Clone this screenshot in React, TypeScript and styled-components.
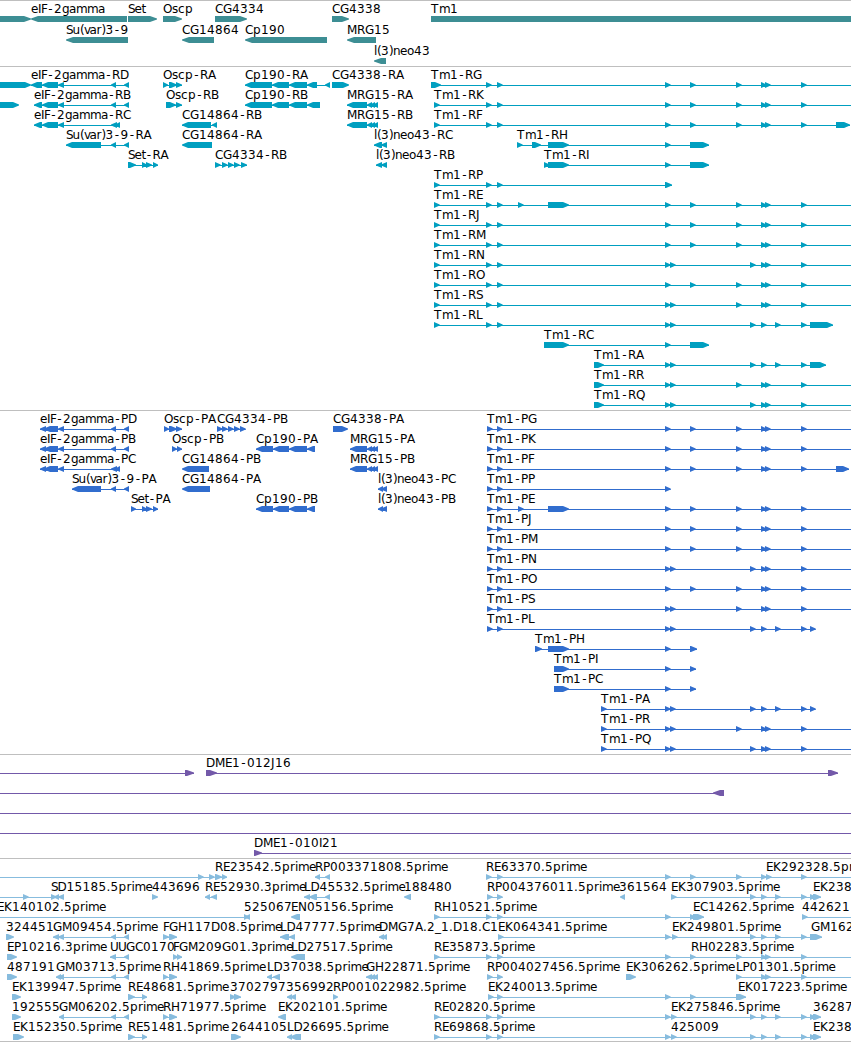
import React from "react";
import styled, { createGlobalStyle } from "styled-components";

const WIDTH = 851;
const EDGE = 860;

type Exon = number | [number, number];
type Dir = 1 | -1;

interface Feature {
  label?: string;
  labelX: number;
  dir: Dir;
  exons: Exon[];
  from?: number;
  to?: number;
}

interface TrackData {
  name: string;
  color: string;
  pitch: number;
  tail: number;
  tip: number;
  rows: Feature[][];
}

/* Forward strand feature; exons given as a start only are short arrows. */
const fwd = (label: string, labelX: number, exons: Exon[], to?: number, from?: number): Feature => ({
  label, labelX, dir: 1, exons, to, from,
});
const rev = (label: string, labelX: number, exons: Exon[], to?: number, from?: number): Feature => ({
  label, labelX, dir: -1, exons, to, from,
});
const text = (label: string, labelX: number): Feature => ({ label, labelX, dir: 1, exons: [] });

const genes: Feature[][] = [
  [
    fwd("", 0, [[-10, 31]]),
    rev("eIF-2gamma", 31, [[31, 127]]),
    fwd("Set", 128, [[128, 157]]),
    fwd("Oscp", 163, [[163, 182]]),
    fwd("CG4334", 215, [[215, 247]]),
    fwd("CG4338", 332, [[332, 349]]),
    fwd("Tm1", 431, [[431, 870]]),
  ],
  [
    rev("Su(var)3-9", 66, [[66, 128]]),
    rev("CG14864", 182, [[182, 214]]),
    rev("Cp190", 245, [[245, 327]]),
    rev("MRG15", 347, [[347, 376]]),
  ],
  [rev("l(3)neo43", 374, [[374, 386]])],
];

const mrg: Exon[] = [367, 370, 373].map((x) => [x, x + 5] as [number, number]);
const cpMid: Exon[] = [[272, 289], [289, 307]];
const eifTail: Exon[] = [[58, 64], [111, 116], [124, 129]];
const midA: Exon[] = [665, 690, 736, 761, 765, 801];
const midN: Exon[] = [665, 670, 750, 761, 765, 801];
const midS: Exon[] = [665, 670, 736, 761, 765, 801];
const midL: Exon[] = [665, 670, 750, 761, 775, 801];
const r0: Exon[] = [434, 486, 497];
const p0: Exon[] = [487, 497];

const transcripts: Feature[][] = [
  [
    fwd("", 0, [[-10, 31]]),
    rev("eIF-2gamma-RD", 31, [[31, 42], [42, 58], ...eifTail]),
    fwd("Oscp-RA", 163, [[163, 168], [169, 177], [176, 182]]),
    rev("Cp190-RA", 245, [[245, 272], ...cpMid, [307, 317], [325, 330]]),
    fwd("CG4338-RA", 332, [[332, 349]]),
    fwd("Tm1-RG", 431, [[431, 441], 486, 497, ...midA], EDGE),
  ],
  [
    fwd("", 0, [[-10, 19]]),
    rev("eIF-2gamma-RB", 34, [[34, 42], [42, 58], ...eifTail]),
    fwd("Oscp-RB", 166, [[166, 176], [176, 182]]),
    rev("Cp190-RB", 245, [[245, 272], ...cpMid, [307, 320]]),
    rev("MRG15-RA", 347, [[347, 367], ...mrg]),
    fwd("Tm1-RK", 434, [...r0, ...midA], EDGE),
  ],
  [
    rev("eIF-2gamma-RC", 34, [[34, 42], [42, 58], [58, 64], [111, 117], [115, 120]]),
    rev("CG14864-RB", 182, [[182, 211], [212, 217]]),
    rev("MRG15-RB", 347, [[347, 367], ...mrg]),
    fwd("Tm1-RF", 434, [...r0, ...midA, [836, 850]]),
  ],
  [
    rev("Su(var)3-9-RA", 66, [[66, 101], [111, 116], [124, 129]]),
    rev("CG14864-RA", 182, [[182, 212]]),
    rev("l(3)neo43-RC", 374, [[374, 382], [381, 387]]),
    fwd("Tm1-RH", 517, [517, [532, 541], [548, 569], 665, [690, 709]]),
  ],
  [
    fwd("Set-RA", 128, [[128, 136], [142, 147], [146, 152], [153, 158]]),
    fwd("CG4334-RB", 215, [215, 222, 228, 234, [241, 247]]),
    rev("l(3)neo43-RB", 376, [[376, 382], [381, 387]]),
    fwd("Tm1-RI", 544, [544, [548, 569], 665, [690, 709]]),
  ],
  [fwd("Tm1-RP", 434, [...r0, [665, 672]])],
  [fwd("Tm1-RE", 434, [...r0, 518, [548, 569], ...midA], EDGE)],
  [fwd("Tm1-RJ", 434, [...r0, ...midA], EDGE)],
  [fwd("Tm1-RM", 434, [...r0, ...midA], EDGE)],
  [fwd("Tm1-RN", 434, [...r0, ...midN], EDGE)],
  [fwd("Tm1-RO", 434, [...r0, ...midA], EDGE)],
  [fwd("Tm1-RS", 434, [...r0, ...midS], EDGE)],
  [fwd("Tm1-RL", 434, [...r0, ...midL, [810, 833]])],
  [fwd("Tm1-RC", 544, [[544, 569], 665, [690, 709]])],
  [fwd("Tm1-RA", 594, [[594, 604], ...midL, [810, 826]])],
  [fwd("Tm1-RR", 594, [[594, 604], ...midS], EDGE)],
  [fwd("Tm1-RQ", 594, [[594, 604], ...midN], EDGE)],
];

const cpP: Exon[] = [[256, 273], [273, 289], [289, 307], [307, 315]];

const proteins: Feature[][] = [
  [
    rev("eIF-2gamma-PD", 40, [[40, 46], [44, 58], ...eifTail]),
    fwd("Oscp-PA", 164, [[164, 169], [169, 177], [176, 182]]),
    fwd("CG4334-PB", 217, [217, 222, 228, 234, 240]),
    fwd("CG4338-PA", 333, [[333, 348]]),
    fwd("Tm1-PG", 487, [...p0, ...midA], EDGE),
  ],
  [
    rev("eIF-2gamma-PB", 40, [[40, 46], [44, 58], ...eifTail]),
    fwd("Oscp-PB", 172, [[172, 177], [177, 182]]),
    rev("Cp190-PA", 256, cpP),
    rev("MRG15-PA", 350, [[350, 367], ...mrg]),
    fwd("Tm1-PK", 487, [...p0, ...midA], EDGE),
  ],
  [
    rev("eIF-2gamma-PC", 40, [[40, 46], [44, 58], [58, 64], [111, 117], [115, 120]]),
    rev("CG14864-PB", 182, [[182, 209]]),
    rev("MRG15-PB", 350, [[350, 367], ...mrg]),
    fwd("Tm1-PF", 487, [...p0, ...midA, [836, 849]]),
  ],
  [
    rev("Su(var)3-9-PA", 72, [[72, 101], [111, 116], [124, 129]]),
    rev("CG14864-PA", 182, [[182, 210]]),
    rev("l(3)neo43-PC", 378, [[378, 383], [381, 387]]),
    fwd("Tm1-PP", 487, [...p0, 665]),
  ],
  [
    fwd("Set-PA", 131, [[131, 136], [142, 147], [146, 152], [153, 158]]),
    rev("Cp190-PB", 256, cpP),
    rev("l(3)neo43-PB", 378, [[378, 383], [381, 387]]),
    fwd("Tm1-PE", 487, [...p0, 518, [548, 569], ...midA], EDGE),
  ],
  [fwd("Tm1-PJ", 487, [...p0, ...midA], EDGE)],
  [fwd("Tm1-PM", 487, [...p0, ...midA], EDGE)],
  [fwd("Tm1-PN", 487, [...p0, ...midN], EDGE)],
  [fwd("Tm1-PO", 487, [...p0, ...midA], EDGE)],
  [fwd("Tm1-PS", 487, [...p0, ...midS], EDGE)],
  [fwd("Tm1-PL", 487, [...p0, ...midL, 810])],
  [fwd("Tm1-PH", 535, [[535, 542], [548, 569], 665, [690, 697]])],
  [fwd("Tm1-PI", 554, [[554, 569], 665, [690, 696]])],
  [fwd("Tm1-PC", 554, [[554, 569], 665, [690, 696]])],
  [fwd("Tm1-PA", 601, [601, ...midL, 810])],
  [fwd("Tm1-PR", 601, [601, ...midS], EDGE)],
  [fwd("Tm1-PQ", 601, [601, ...midN], EDGE)],
];

const clones: Feature[][] = [
  [
    fwd("", 0, [[185, 194]], undefined, -5),
    fwd("DME1-012J16", 206, [[206, 217], [828, 838]]),
  ],
  [rev("", 0, [[713, 724]], undefined, -5)],
  [fwd("", 0, [], EDGE, -5)],
  [fwd("", 0, [], EDGE, -5)],
  [fwd("DME1-010I21", 254, [[254, 262]], EDGE)],
];

const cdnaEnd: Exon[] = [665, 671, 750, 761, 775, 801, [810, 816], [813, 821]];

const ests: Feature[][] = [
  [
    fwd("", 0, [198, 209], undefined, -5),
    fwd("RE23542.5prime", 215, [[215, 222], [222, 227]]),
    rev("RP003371808.5prime", 315, [[315, 320], [325, 330]]),
    fwd("RE63370.5prime", 486, [486, 497, 665, 690, 736, 761, 766, 801], EDGE),
    text("EK292328.5pr", 766),
  ],
  [
    fwd("", 0, [23, 51], undefined, -5),
    rev("SD15185.5prime", 51, [[54, 59], [58, 64]]),
    fwd("443696", 152, [[152, 158]]),
    rev("RE52930.3prime", 205, [[205, 210], [211, 217]]),
    rev("LD45532.5prime", 304, [[304, 310], [309, 317], [325, 330]]),
    rev("188480", 404, [[404, 411]]),
    fwd("RP004376011.5prime", 487, [487, 497]),
    rev("361564", 619, [[620, 625]]),
    fwd("EK307903.5prime", 671, [671, 750, 761, 775, 801, [810, 816], [813, 821]]),
    text("EK238", 813),
  ],
  [
    fwd("EK140102.5prime", -3, [[244, 249]], undefined, -5),
    rev("525067", 244, [[245, 250]]),
    rev("EN05156.5prime", 291, [[291, 300]]),
    fwd("RH10521.5prime", 434, [...r0, 665, 690, [693, 704]]),
    text("EC14262.5prime", 693),
    fwd("442621", 802, [802], EDGE),
  ],
  [
    fwd("324451", 6, [[6, 14]]),
    rev("GM09454.5prime", 53, [[53, 59], ...eifTail]),
    fwd("FGH117D08.5prime", 163, [[163, 169], [169, 177]]),
    rev("LD47777.5prime", 280, [[280, 289], [289, 295]]),
    rev("DMG7A.2_1.D18.C1", 379, [[379, 384], [382, 387]]),
    fwd("EK064341.5prime", 498, [498, 665, 672, 750, 761, 775, 801, [810, 822]]),
    text("EK249801.5prime", 672),
    text("GM162", 811),
  ],
  [
    fwd("EP10216.3prime", 7, [[7, 17]]),
    rev("UUGC0170", 110, [[110, 116], [124, 129]]),
    fwd("FGM209G01.3prime", 173, [[173, 178], [177, 182]]),
    rev("LD27517.5prime", 291, [[291, 305]]),
    fwd("RE35873.5prime", 434, [...r0, ...midA], EDGE),
    text("RH02283.5prime", 691),
  ],
  [
    fwd("487191", 7, [[7, 17]]),
    rev("GM03713.5prime", 56, [[56, 61], ...eifTail]),
    fwd("RH41869.5prime", 163, [[163, 168], [169, 177]]),
    rev("LD37038.5prime", 267, [[267, 272], [273, 280]]),
    rev("GH22871.5prime", 366, [[366, 372], [370, 375], [373, 378]]),
    fwd("RP004027456.5prime", 487, [487, 497]),
    fwd("EK306262.5prime", 626, [[626, 636]]),
    fwd("LP01301.5prime", 736, [736, 761, 765, 801], EDGE),
  ],
  [
    fwd("EK139947.5prime", 12, [[12, 21]]),
    fwd("RE48681.5prime", 128, [[128, 135], [142, 147]]),
    fwd("3702797", 230, [[230, 236], [234, 241]]),
    rev("356992", 286, [[287, 292], [290, 296]]),
    fwd("RP001022982.5prime", 333, [[333, 338]]),
    fwd("EK240013.5prime", 488, [488, 497, 665, 690, [736, 746]]),
    text("EK017223.5prime", 738),
  ],
  [
    fwd("192555", 12, [[12, 21]]),
    rev("GM06202.5prime", 59, [[59, 64], [111, 116], [124, 129]]),
    fwd("RH71977.5prime", 163, [[163, 168], [169, 177]]),
    rev("EK202101.5prime", 278, [[278, 286]]),
    fwd("RE02820.5prime", 434, [...r0, ...cdnaEnd]),
    text("EK275846.5prime", 671),
    text("36287", 813),
  ],
  [
    fwd("EK152350.5prime", 13, [[13, 24]]),
    fwd("RE51481.5prime", 128, [[128, 135], [142, 147]]),
    fwd("2644105", 231, [[231, 241]]),
    rev("LD26695.5prime", 287, [[287, 292], [290, 301]]),
    fwd("RE69868.5prime", 434, [...r0, ...cdnaEnd]),
    text("425009", 671),
    text("EK238", 813),
  ],
];

const tracks: TrackData[] = [
  { name: "Genes", color: "#3d8e94", pitch: 21, tail: 2, tip: 7, rows: genes },
  { name: "Transcripts", color: "#009fc0", pitch: 20, tail: 3, tip: 6, rows: transcripts },
  { name: "Proteins", color: "#316dce", pitch: 20, tail: 3, tip: 6, rows: proteins },
  { name: "Clones", color: "#7359a9", pitch: 20, tail: 3, tip: 7, rows: clones },
  { name: "ESTs", color: "#87bcde", pitch: 20, tail: 2, tip: 6, rows: ests },
];

const ADVANCE: Record<string, number> = {
  A: 8, B: 8, C: 8, D: 9, E: 7, F: 6, G: 9, H: 9, I: 3, J: 4, K: 8, L: 6.5, M: 10, N: 9, O: 9,
  P: 7, Q: 9, R: 8, S: 6.5, T: 8, U: 8,
  a: 7, c: 7, e: 7, g: 7, i: 3, l: 3, m: 11, n: 7, o: 7, p: 8, r: 5, s: 6, t: 4, u: 7.5, v: 5.5,
  "(": 4, ")": 4, ".": 4, "-": 7, _: 6,
};

function glyphPositions(label: string, start: number) {
  let x = start;
  return Array.from(label)
    .map((ch) => {
      const at = ch === "-" ? x + 1.3 : x;
      x += ADVANCE[ch] ?? 8;
      return at;
    })
    .join(" ");
}

const GlobalStyle = createGlobalStyle`
  body { margin: 0; background: #fff; }
`;

const Browser = styled.main`
  display: flex;
  flex-direction: column;
  width: ${WIDTH}px;
  height: 1042px;
  overflow: hidden;
  background: #fff;
`;

const Track = styled.section<{ $tail: number }>`
  display: flex;
  flex-direction: column;
  flex: none;
  border-top: 1px solid #bfbfbf;
  padding-bottom: ${(p) => p.$tail}px;

  &:last-child {
    border-bottom: 1px solid #bfbfbf;
  }
`;

const Lane = styled.svg`
  display: block;
  flex: none;
  overflow: visible;
`;

const Label = styled.text`
  fill: #000;
  font-family: "DejaVu Sans", sans-serif;
  font-size: 12px;
`;

function arrow(a: number, b: number, dir: Dir, tip: number) {
  const t = Math.min(b - a, tip);
  return dir === 1
    ? `M${a} 15H${b - t}L${b} 17.6V18.4L${b - t} 21H${a}Z`
    : `M${b} 15H${a + t}L${a} 17.6V18.4L${a + t} 21H${b}Z`;
}

function FeatureGlyph({ feature, tip }: { feature: Feature; tip: number }) {
  const spans = feature.exons.map((e): [number, number] => (typeof e === "number" ? [e, e + 5.7] : e));
  const from = feature.from ?? (spans.length ? spans[0][0] : 0);
  const to = feature.to ?? (spans.length ? spans[spans.length - 1][1] : 0);
  if (to <= from) return null;
  return (
    <g>
      {(spans.length !== 1 || feature.from !== undefined || feature.to !== undefined) && (
        <rect x={from} y={18} width={to - from} height={1} />
      )}
      <path d={spans.map(([a, b]) => arrow(a, b, feature.dir, tip)).join("")} />
    </g>
  );
}

export default function App() {
  return (
    <>
      <GlobalStyle />
      <Browser>
        {tracks.map((track) => (
          <Track key={track.name} $tail={track.tail} aria-label={track.name}>
            {track.rows.map((row, i) => (
              <Lane key={i} width={WIDTH} height={track.pitch} fill={track.color}>
                {row.map((f, j) => (
                  <FeatureGlyph key={j} feature={f} tip={track.tip} />
                ))}
                {row.map((f, j) =>
                  f.label ? (
                    <Label key={j} x={glyphPositions(f.label, f.labelX)} y={12}>
                      {f.label}
                    </Label>
                  ) : null
                )}
              </Lane>
            ))}
          </Track>
        ))}
      </Browser>
    </>
  );
}
